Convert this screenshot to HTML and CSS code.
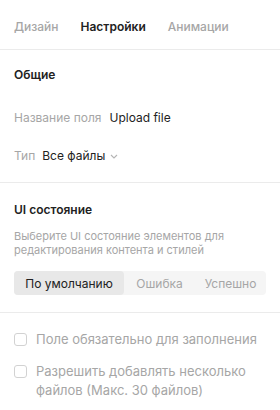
FILE: index.html
```html
<!DOCTYPE html>
<html lang="ru">
<head>
    <meta charset="UTF-8">
    <title>Upload file settings</title>
    <link rel="stylesheet" href="styles.css">
</head>
<body>
    <div class="tabs">
        <span class="tab">Дизайн</span>
        <span class="tab active">Настройки</span>
        <span class="tab">Анимации</span>
    </div>

    <div class="section general">
        <h3>Общие</h3>
        <div class="field">
            <span class="label">Название поля</span>
            <span class="value">Upload file</span>
        </div>
        <div class="field type">
            <span class="label">Тип</span>
            <span class="value">Все файлы</span>
            <svg class="chevron" width="8" height="5" viewBox="0 0 8 5"><path d="M1 1l3 3 3-3" fill="none" stroke="#b5b5b5" stroke-width="1.1"/></svg>
        </div>
    </div>

    <div class="section state">
        <h3>UI состояние</h3>
        <p class="hint">Выберите UI состояние элементов для редактирования контента и стилей</p>
        <div class="segments">
            <span class="segment selected">По умолчанию</span>
            <span class="segment">Ошибка</span>
            <span class="segment">Успешно</span>
        </div>
    </div>

    <div class="section checks">
        <label class="check"><span class="box"></span><span>Поле обязательно для заполнения</span></label>
        <label class="check"><span class="box"></span><span>Разрешить добавлять несколько файлов (Макс. 30 файлов)</span></label>
    </div>
</body>
</html>
```

FILE: styles.css
```css
body {
    margin: 0;
    font-family: Inter, "Noto Sans", sans-serif;
    color: #222;
    background: #fff;
}

.tabs {
    display: flex;
    gap: 22px;
    padding: 19px 14px 14px;
    line-height: 16px;
    border-bottom: 1px solid #ebebeb;
    font-size: 12px;
}

.tab {
    color: #a6a6a6;
    font-weight: 500;
}

.tab.active {
    color: #222;
    font-weight: 600;
}

.section {
    padding: 0 14px;
    border-bottom: 1px solid #ebebeb;
}

.section h3 {
    margin: 0;
    font-size: 12px;
    font-weight: 600;
    line-height: 16px;
}

.general {
    padding-top: 17px;
    padding-bottom: 18px;
}

.field {
    display: flex;
    align-items: center;
    gap: 8px;
    font-size: 12px;
    line-height: 16px;
    margin-top: 27px;
}

.field.type {
    margin-top: 22px;
    gap: 7px;
}

.label {
    color: #a6a6a6;
}

.value {
    color: #222;
}

.chevron {
    margin-left: -2px;
}

.state {
    padding-top: 19px;
    padding-bottom: 17px;
}

.hint {
    margin: 11px 0 0;
    font-size: 11px;
    line-height: 14px;
    color: #a6a6a6;
}

.segments {
    display: flex;
    margin-top: 14px;
    background: #f5f5f5;
    border-radius: 4px;
    height: 24px;
    font-size: 12px;
}

.segment {
    flex: 1;
    display: flex;
    align-items: center;
    justify-content: center;
    color: #a6a6a6;
}

.segment.selected {
    flex: 0 0 110px;
    background: #e8e8e8;
    color: #222;
    border-radius: 4px;
}

.checks {
    border-bottom: none;
    padding-top: 17px;
}

.check {
    display: flex;
    gap: 9px;
    font-size: 13px;
    line-height: 19px;
    color: #a6a6a6;
    margin-bottom: 13px;
}

.box {
    flex: 0 0 auto;
    width: 11px;
    height: 11px;
    border: 1px solid #d2d2d2;
    border-radius: 3px;
    margin-top: 3px;
}
```
